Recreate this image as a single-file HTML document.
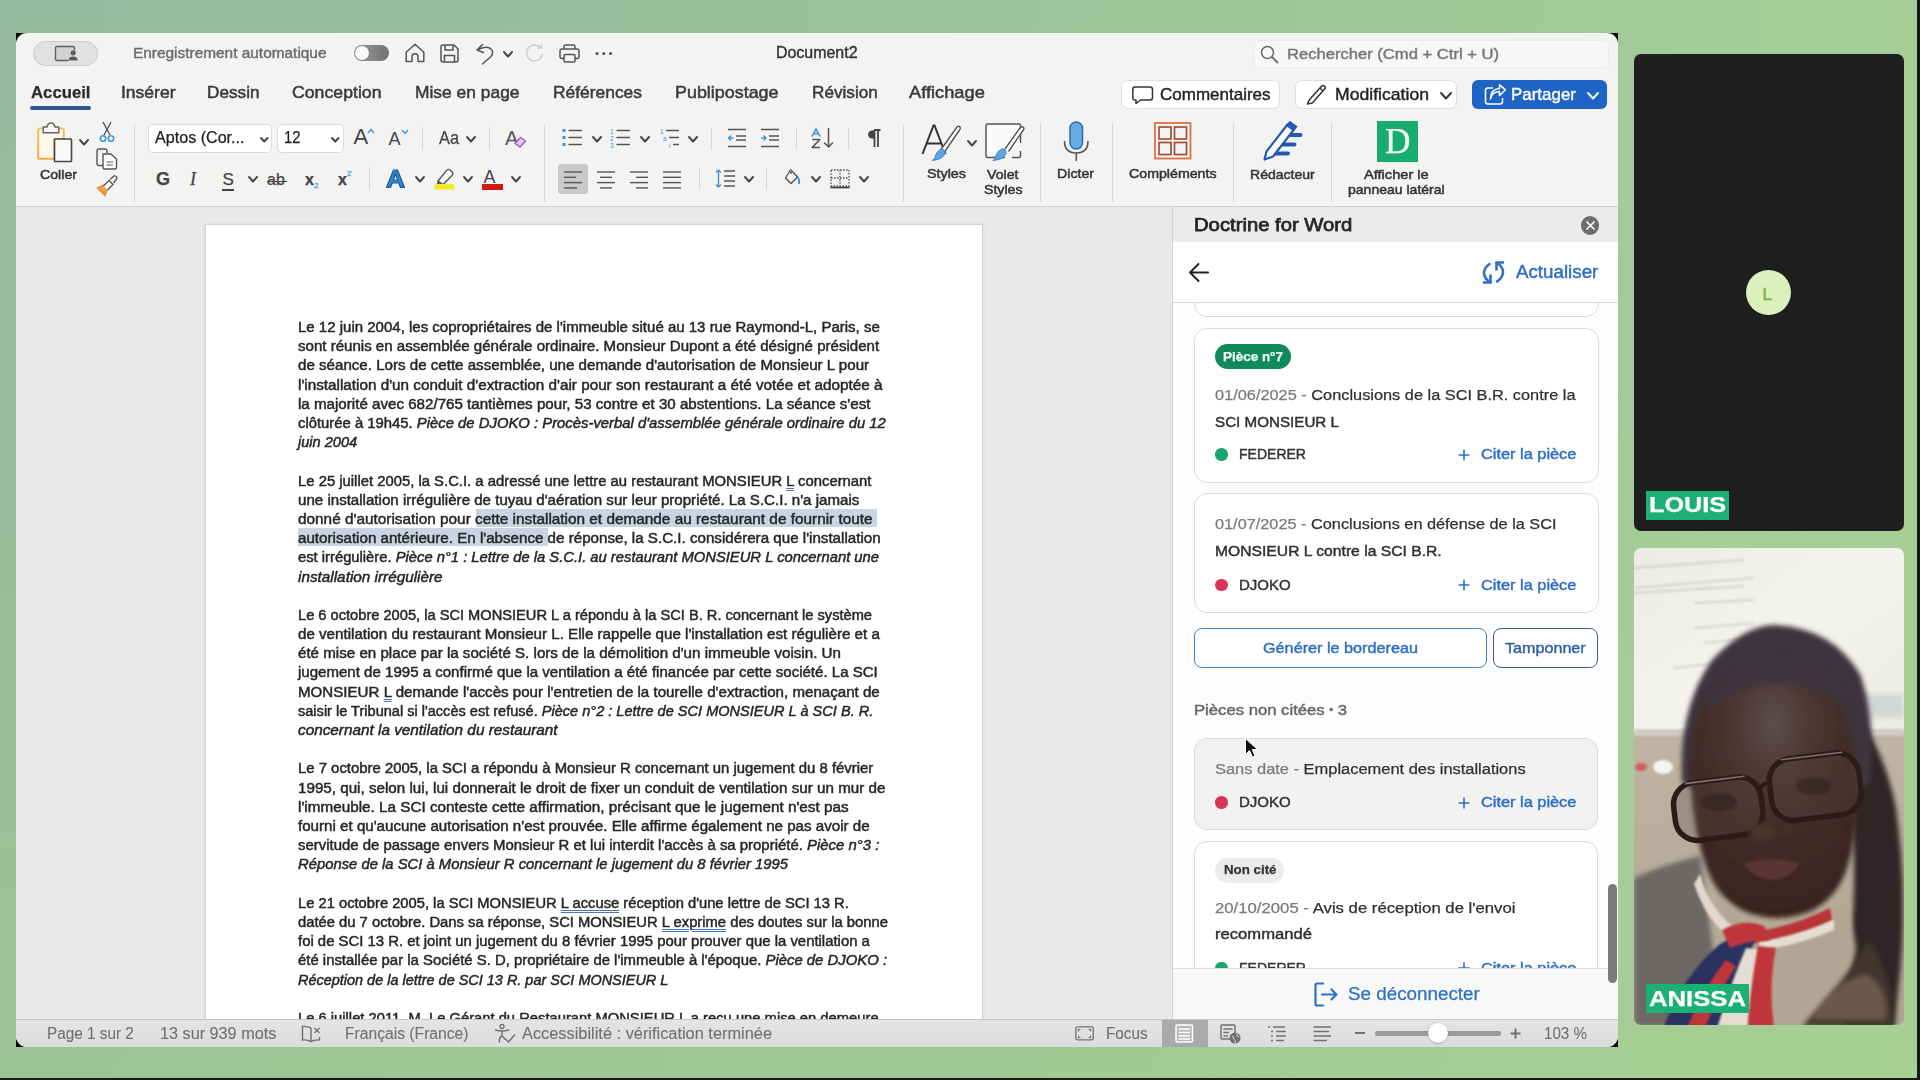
<!DOCTYPE html>
<html><head><meta charset="utf-8">
<style>
*{box-sizing:border-box;margin:0;padding:0}
html,body{width:1920px;height:1080px;overflow:hidden}
body{position:relative;font-family:"Liberation Sans",sans-serif;background:linear-gradient(180deg,rgba(170,210,140,0) 0%,rgba(170,210,140,0.1) 40%,rgba(170,210,140,0.4) 100%),linear-gradient(90deg,#93ba9b 0%,#9ac19a 45%,#a6ce97 100%);color:#222}
.a{position:absolute}
.t{position:absolute;white-space:nowrap;line-height:1;-webkit-text-stroke-width:0.25px}
svg{position:absolute;overflow:visible}
.sep{position:absolute;width:1px;background:#d6d6d4}
.chev{position:absolute}
u{text-decoration-line:underline;text-decoration-style:double;text-decoration-color:#4a78c0;text-decoration-thickness:1px;text-underline-offset:2px}
</style></head><body>
<div class="a" style="left:16px;top:33px;width:14px;height:14px;background:#050505"></div>
<div class="a" style="left:1604px;top:33px;width:14px;height:14px;background:#050505"></div>
<div class="a" style="left:16px;top:1033px;width:14px;height:14px;background:#050505"></div>
<div class="a" style="left:1604px;top:1033px;width:14px;height:14px;background:#050505"></div>
<div class="a" style="left:16px;top:33px;width:1602px;height:1014px;background:#f3f3f1;border-radius:11px"></div>
<div class="a" style="left:33px;top:41px;width:65px;height:25px;border-radius:13px;background:#e1e1e0;border:1px solid #cdcdcb"></div>
<svg style="left:54px;top:45px" width="26" height="18"><path d="M14.5 15.5 H3 Q1.5 15.5 1.5 14 V3 Q1.5 1.5 3 1.5 H19 Q20.5 1.5 20.5 3 V5" fill="#d2d2d1" stroke="#5e5e5e" stroke-width="1.4"/><circle cx="19.2" cy="7.8" r="2.6" fill="#5e5e5e"/><path d="M14.6 15.6 Q14.8 11.5 19.2 11.5 Q23.6 11.5 23.8 15.6 Z" fill="#5e5e5e"/></svg>
<div class="t" id="t1" style="left:132.50px;top:46.45px;font-size:14.00px;color:#6c6c6c;transform:scaleX(1.1002);transform-origin:0 0;-webkit-text-stroke-width:0.4px;">Enregistrement automatique</div>
<div class="a" style="left:354px;top:45px;width:35px;height:16px;border-radius:8px;background:linear-gradient(90deg,#9a9a9a,#727272)"></div>
<div class="a" style="left:355px;top:46px;width:14px;height:14px;border-radius:7px;background:#fafafa;box-shadow:0 0 1px #555"></div>
<svg style="left:405px;top:43px" width="20" height="20"><path d="M1.2 9.2 L10 1.3 L18.8 9.2 V18.6 H13 V13.4 Q13 10.8 10 10.8 Q7 10.8 7 13.4 V18.6 H1.2 Z" fill="none" stroke="#555" stroke-width="1.5" stroke-linejoin="round"/></svg>
<svg style="left:440px;top:44px" width="19" height="19"><path d="M1 3 Q1 1 3 1 H14 L18 5 V16 Q18 18 16 18 H3 Q1 18 1 16 Z" fill="none" stroke="#555" stroke-width="1.5"/><path d="M5 1 V6 H13 V1" fill="none" stroke="#555" stroke-width="1.5"/><path d="M4.5 18 V11.5 H14.5 V18" fill="none" stroke="#555" stroke-width="1.5"/></svg>
<svg style="left:475px;top:42px" width="20" height="23"><path d="M2 8 L7.5 2.5 M2 8 L8.5 10.5 M2.5 8 Q10 3.5 15.5 6.5 Q19.5 10 16 14.5 L7.5 22" fill="none" stroke="#555" stroke-width="1.5" stroke-linecap="round"/></svg>
<svg style="left:503.0px;top:51.0px" width="10" height="7"><path d="M1 1 L5.0 5.5 L9.0 1" fill="none" stroke="#444" stroke-width="1.9" stroke-linecap="round" stroke-linejoin="round"/></svg>
<svg style="left:525px;top:43px" width="20" height="20"><path d="M15.8 5 A8 8 0 1 0 17.5 11" fill="none" stroke="#cfcfcf" stroke-width="1.5"/><path d="M12.5 5 H16.5 V1" fill="none" stroke="#cfcfcf" stroke-width="1.5"/></svg>
<svg style="left:559px;top:44px" width="21" height="19"><path d="M5 5 V2.5 Q5 1 6.5 1 H14.5 Q16 1 16 2.5 V5" fill="none" stroke="#555" stroke-width="1.5"/><path d="M5 14.5 H3 Q1 14.5 1 12.5 V7 Q1 5 3 5 H18 Q20 5 20 7 V12.5 Q20 14.5 18 14.5 H16" fill="none" stroke="#555" stroke-width="1.5"/><rect x="5" y="10.5" width="11" height="7.5" rx="1.2" fill="none" stroke="#555" stroke-width="1.5"/></svg>
<svg style="left:595px;top:51px" width="18" height="5"><circle cx="2" cy="2.5" r="1.6" fill="#555"/><circle cx="8.8" cy="2.5" r="1.6" fill="#555"/><circle cx="15.6" cy="2.5" r="1.6" fill="#555"/></svg>
<div class="t" id="t2" style="left:776.00px;top:44.76px;font-size:16.00px;color:#333;transform:scaleX(0.9960);transform-origin:0 0;-webkit-text-stroke-width:0.4px;">Document2</div>
<div class="a" style="left:1253px;top:40px;width:356px;height:28px;border-radius:6px;background:#f7f7f5;border:1px solid #ebebe9"></div>
<svg style="left:1260px;top:45px" width="19" height="19"><circle cx="7.5" cy="7.5" r="6" fill="none" stroke="#6a6a6a" stroke-width="1.6"/><path d="M12 12 L17.5 17.5" stroke="#6a6a6a" stroke-width="1.8" stroke-linecap="round"/></svg>
<div class="t" id="t3" style="left:1287.00px;top:45.88px;font-size:15.50px;color:#777;transform:scaleX(1.0701);transform-origin:0 0;-webkit-text-stroke-width:0.45px;">Rechercher (Cmd + Ctrl + U)</div>
<div class="t" id="t4" style="left:30.70px;top:83.91px;font-size:17.00px;color:#2b2b2b;font-weight:bold;transform:scaleX(0.9837);transform-origin:0 0;">Accueil</div>
<div class="t" id="t5" style="left:120.70px;top:83.91px;font-size:17.00px;color:#3a3a3a;transform:scaleX(1.0298);transform-origin:0 0;-webkit-text-stroke-width:0.5px;">Insérer</div>
<div class="t" id="t6" style="left:207.30px;top:83.91px;font-size:17.00px;color:#3a3a3a;transform:scaleX(1.0102);transform-origin:0 0;-webkit-text-stroke-width:0.5px;">Dessin</div>
<div class="t" id="t7" style="left:292.30px;top:83.91px;font-size:17.00px;color:#3a3a3a;transform:scaleX(1.0405);transform-origin:0 0;-webkit-text-stroke-width:0.5px;">Conception</div>
<div class="t" id="t8" style="left:415.00px;top:83.91px;font-size:17.00px;color:#3a3a3a;transform:scaleX(1.0237);transform-origin:0 0;-webkit-text-stroke-width:0.5px;">Mise en page</div>
<div class="t" id="t9" style="left:552.70px;top:83.91px;font-size:17.00px;color:#3a3a3a;transform:scaleX(1.0237);transform-origin:0 0;-webkit-text-stroke-width:0.5px;">Références</div>
<div class="t" id="t10" style="left:675.00px;top:83.91px;font-size:17.00px;color:#3a3a3a;transform:scaleX(1.0528);transform-origin:0 0;-webkit-text-stroke-width:0.5px;">Publipostage</div>
<div class="t" id="t11" style="left:811.70px;top:83.91px;font-size:17.00px;color:#3a3a3a;transform:scaleX(1.0092);transform-origin:0 0;-webkit-text-stroke-width:0.5px;">Révision</div>
<div class="t" id="t12" style="left:909.30px;top:83.91px;font-size:17.00px;color:#3a3a3a;transform:scaleX(1.0740);transform-origin:0 0;-webkit-text-stroke-width:0.5px;">Affichage</div>
<div class="a" style="left:30px;top:105.5px;width:61px;height:4px;border-radius:2px;background:#2d5892"></div>
<div class="a" style="left:1121px;top:79.5px;width:159px;height:29px;border-radius:7px;background:#fff;border:1px solid #dedede"></div>
<svg style="left:1132px;top:86px" width="22" height="19"><path d="M3 1 H18 Q20.5 1 20.5 3.5 V11.5 Q20.5 14 18 14 H8.5 L4 17.5 V14 H3 Q0.8 14 0.8 11.5 V3.5 Q0.8 1 3 1 Z" fill="none" stroke="#333" stroke-width="1.5" stroke-linejoin="round"/></svg>
<div class="t" id="t13" style="left:1159.70px;top:86.01px;font-size:17.00px;color:#222;transform:scaleX(1.0005);transform-origin:0 0;-webkit-text-stroke-width:0.4px;">Commentaires</div>
<div class="a" style="left:1295px;top:79.5px;width:162px;height:29px;border-radius:7px;background:#fff;border:1px solid #dedede"></div>
<svg style="left:1306px;top:84px" width="22" height="21"><path d="M3.2 16 L15.5 2.2 Q17 0.8 18.6 2.2 Q20 3.6 18.6 5.1 L6.3 18.9 L1.5 20 Z" fill="none" stroke="#333" stroke-width="1.5" stroke-linejoin="round"/><path d="M14 4 L17 7" stroke="#333" stroke-width="1.4"/></svg>
<div class="t" id="t14" style="left:1334.50px;top:86.01px;font-size:17.00px;color:#222;transform:scaleX(1.0362);transform-origin:0 0;-webkit-text-stroke-width:0.4px;">Modification</div>
<svg style="left:1439.5px;top:92.0px" width="12" height="8"><path d="M1 1 L6.0 6.5 L11.0 1" fill="none" stroke="#333" stroke-width="1.9" stroke-linecap="round" stroke-linejoin="round"/></svg>
<div class="a" style="left:1471.5px;top:79.5px;width:135px;height:29px;border-radius:6px;background:#1e63c6"></div>
<svg style="left:1484px;top:84px" width="23" height="21"><path d="M9 4 H4 Q1.5 4 1.5 6.5 V17.5 Q1.5 20 4 20 H16 Q18.5 20 18.5 17.5 V14" fill="none" stroke="#fff" stroke-width="1.5"/><path d="M6.5 15 Q7.5 8 15.5 7.5 V11.5 L21.5 5.8 L15.5 0.8 V4.5 Q6.5 5 6.5 15 Z" fill="none" stroke="#fff" stroke-width="1.5" stroke-linejoin="round"/></svg>
<div class="t" id="t15" style="left:1511.00px;top:86.01px;font-size:17.00px;color:#fff;transform:scaleX(0.9969);transform-origin:0 0;-webkit-text-stroke-width:0.4px;">Partager</div>
<svg style="left:1587.0px;top:92.0px" width="12" height="8"><path d="M1 1 L6.0 6.5 L11.0 1" fill="none" stroke="#fff" stroke-width="1.9" stroke-linecap="round" stroke-linejoin="round"/></svg>
<div class="a" style="left:16px;top:206px;width:1602px;height:1px;background:#cfcfcd"></div>
<svg style="left:37px;top:122px" width="38" height="42"><defs><linearGradient id="cbg" x1="0" y1="0" x2="0" y2="1"><stop offset="0" stop-color="#e9c46a"/><stop offset="1" stop-color="#f0a848"/></linearGradient></defs><path d="M6.5 6.5 H2.5 Q1.2 6.5 1.2 8 V35.5 Q1.2 36.8 2.5 36.8 H17.5 V17 H26.8 V8 Q26.8 6.5 25.5 6.5 H21.5" fill="#fdf8ea" stroke="url(#cbg)" stroke-width="2"/><path d="M6.2 5 H10 Q10.8 1 14 1 Q17.2 1 18 5 H21.8 V10.8 H6.2 Z" fill="#fafafa" stroke="#666" stroke-width="1.5" stroke-linejoin="round"/><rect x="17.5" y="17" width="17" height="22.5" rx="0.8" fill="#fafafa" stroke="#444" stroke-width="1.6"/></svg>
<svg style="left:78.5px;top:139.0px" width="10" height="7"><path d="M1 1 L5.0 5.5 L9.0 1" fill="none" stroke="#444" stroke-width="1.9" stroke-linecap="round" stroke-linejoin="round"/></svg>
<div class="t" id="t16" style="left:40.00px;top:168.07px;font-size:13.50px;color:#333;transform:scaleX(1.0492);transform-origin:0 0;-webkit-text-stroke-width:0.5px;">Coller</div>
<svg style="left:99px;top:121px" width="16" height="22"><path d="M4 1 L11 14 M12 1 L5 14" stroke="#555" stroke-width="1.4"/><circle cx="4" cy="17.5" r="2.7" fill="none" stroke="#3f96d6" stroke-width="1.6"/><circle cx="12" cy="17.5" r="2.7" fill="none" stroke="#3f96d6" stroke-width="1.6"/></svg>
<svg style="left:96px;top:148px" width="22" height="22"><path d="M9 17.5 H3 Q1 17.5 1 15.5 V3 Q1 1 3 1 H9 Q11 1 11 3 V5" fill="none" stroke="#555" stroke-width="1.4"/><path d="M7 6 H15 L20.5 11 V19.5 Q20.5 21 19 21 H8.5 Q7 21 7 19.5 Z" fill="#fff" stroke="#555" stroke-width="1.4"/><path d="M10.5 14 H17 M10.5 17 H17" stroke="#555" stroke-width="1.2"/></svg>
<svg style="left:96px;top:175px" width="23" height="23"><path d="M1.5 13 L9 20.5 L11.5 14 L7.5 10 Z" fill="#f0a04b" stroke="#e08a32" stroke-width="1.3"/><path d="M7.5 11 L13 5.5 L17 9.5 L11.5 15" fill="#fff" stroke="#555" stroke-width="1.4"/><path d="M14 4.5 L18 1 Q20.5 0.5 21 3 Q21 4 17.5 8" fill="none" stroke="#555" stroke-width="1.4"/></svg>
<div class="sep" style="left:134px;top:124px;height:79px;background:#d8d8d6"></div>
<div class="a" style="left:148px;top:124px;width:124px;height:29px;border-radius:5px;background:#fff;border:1px solid #dcdcda"></div>
<div class="t" id="t17" style="left:155.00px;top:129.96px;font-size:16.00px;color:#222;transform:scaleX(1.0065);transform-origin:0 0;">Aptos (Cor...</div>
<svg style="left:260.0px;top:136.5px" width="8" height="6"><path d="M1 1 L4.2 4.5 L7.5 1" fill="none" stroke="#444" stroke-width="1.9" stroke-linecap="round" stroke-linejoin="round"/></svg>
<div class="a" style="left:277px;top:124px;width:67px;height:29px;border-radius:5px;background:#fff;border:1px solid #dcdcda"></div>
<div class="t" id="t18" style="left:283.50px;top:129.96px;font-size:16.00px;color:#222;transform:scaleX(0.9271);transform-origin:0 0;">12</div>
<svg style="left:331.0px;top:136.5px" width="8" height="6"><path d="M1 1 L4.2 4.5 L7.5 1" fill="none" stroke="#444" stroke-width="1.9" stroke-linecap="round" stroke-linejoin="round"/></svg>
<div class="t" id="t19" style="left:353.50px;top:126.18px;font-size:22.00px;color:#444;-webkit-text-stroke-width:0;">A</div>
<svg style="left:367px;top:128px" width="8" height="6"><path d="M1 5 L4 1.5 L7 5" fill="none" stroke="#3f96d6" stroke-width="1.4"/></svg>
<div class="t" id="t20" style="left:388.50px;top:129.76px;font-size:18.00px;color:#444;-webkit-text-stroke-width:0;">A</div>
<svg style="left:401px;top:129px" width="8" height="6"><path d="M1 1 L4 4.5 L7 1" fill="none" stroke="#3f96d6" stroke-width="1.4"/></svg>
<div class="sep" style="left:422px;top:127px;height:23px;background:#d8d8d6"></div>
<div class="t" id="t21" style="left:438.50px;top:130.19px;font-size:17.50px;color:#444;transform:scaleX(0.9343);transform-origin:0 0;">Aa</div>
<svg style="left:466.0px;top:135.5px" width="10" height="7"><path d="M1 1 L5.0 5.5 L9.0 1" fill="none" stroke="#444" stroke-width="1.9" stroke-linecap="round" stroke-linejoin="round"/></svg>
<div class="sep" style="left:489px;top:127px;height:23px;background:#d8d8d6"></div>
<div class="t" id="t22" style="left:505.00px;top:127.57px;font-size:20.00px;color:#555;-webkit-text-stroke-width:0;">A</div>
<svg style="left:513px;top:136px" width="14" height="12"><path d="M2 7.5 L7.5 1.5 L12.5 5 L7 11 Z" fill="#e3c7ef" stroke="#a160c8" stroke-width="1.4"/></svg>
<div class="sep" style="left:544px;top:124px;height:78px;background:#d8d8d6"></div>
<div class="t" id="t23" style="left:156.00px;top:170.26px;font-size:18.00px;color:#444;font-weight:bold;">G</div>
<div class="t" id="t24" style="left:190.00px;top:170.26px;font-size:18.00px;color:#444;font-style:italic;font-family:'Liberation Serif',serif;">I</div>
<div class="t" id="t25" style="left:222.50px;top:171.11px;font-size:17.00px;color:#444;">S</div>
<div class="a" style="left:222px;top:189px;width:12px;height:1.5px;background:#444"></div>
<svg style="left:247.5px;top:175.5px" width="10" height="7"><path d="M1 1 L5.0 5.5 L9.0 1" fill="none" stroke="#444" stroke-width="1.9" stroke-linecap="round" stroke-linejoin="round"/></svg>
<div class="t" id="t26" style="left:267.00px;top:171.96px;font-size:16.00px;color:#444;">ab</div>
<div class="a" style="left:267px;top:180.5px;width:20px;height:1.5px;background:#444"></div>
<div class="t" id="t27" style="left:305.00px;top:171.96px;font-size:16.00px;color:#444;font-weight:bold;">x</div>
<div class="t" id="t28" style="left:314.00px;top:182.23px;font-size:8.00px;color:#3f96d6;">2</div>
<div class="t" id="t29" style="left:338.00px;top:171.96px;font-size:16.00px;color:#444;font-weight:bold;">x</div>
<div class="t" id="t30" style="left:347.00px;top:170.23px;font-size:8.00px;color:#3f96d6;">2</div>
<div class="sep" style="left:369px;top:167px;height:23px;background:#d8d8d6"></div>
<svg style="left:385px;top:169px" width="22" height="20"><path d="M1.5 18.5 L8.5 1 H12.5 L19.5 18.5 H15.5 L13.8 14 H7.2 L5.5 18.5 Z M8.3 11 H12.7 L10.5 5 Z" fill="#2f86c8" stroke="#1e5a96" stroke-width="1.2" stroke-linejoin="round"/></svg>
<svg style="left:414.5px;top:176.0px" width="10" height="7"><path d="M1 1 L5.0 5.5 L9.0 1" fill="none" stroke="#444" stroke-width="1.9" stroke-linecap="round" stroke-linejoin="round"/></svg>
<svg style="left:434px;top:168px" width="22" height="23"><path d="M4 13 L13 2 Q14.5 0.8 16 2 L18.5 4.5 Q19.5 6 18 7.5 L9 16.5 Z" fill="#fff" stroke="#555" stroke-width="1.4"/><path d="M4 13 L2.5 16.5 L9 16.5" fill="#555"/><rect x="0.5" y="16" width="20" height="5.5" rx="2" fill="#eeee22"/></svg>
<svg style="left:462.5px;top:176.0px" width="10" height="7"><path d="M1 1 L5.0 5.5 L9.0 1" fill="none" stroke="#444" stroke-width="1.9" stroke-linecap="round" stroke-linejoin="round"/></svg>
<div class="t" id="t31" style="left:483.50px;top:168.26px;font-size:18.00px;color:#444;-webkit-text-stroke-width:0;">A</div>
<div class="a" style="left:482px;top:184px;width:20.5px;height:5.5px;background:#d01818"></div>
<svg style="left:510.5px;top:176.0px" width="10" height="7"><path d="M1 1 L5.0 5.5 L9.0 1" fill="none" stroke="#444" stroke-width="1.9" stroke-linecap="round" stroke-linejoin="round"/></svg>
<svg style="left:562px;top:128px" width="22" height="20"><rect x="0.5" y="1" width="3" height="3" fill="#3f96d6"/><rect x="0.5" y="8" width="3" height="3" fill="#3f96d6"/><rect x="0.5" y="15" width="3" height="3" fill="#3f96d6"/><path d="M6.5 2.5 H20 M6.5 9.5 H20 M6.5 16.5 H20" stroke="#555" stroke-width="1.5"/></svg>
<svg style="left:591.5px;top:135.5px" width="10" height="7"><path d="M1 1 L5.0 5.5 L9.0 1" fill="none" stroke="#444" stroke-width="1.9" stroke-linecap="round" stroke-linejoin="round"/></svg>
<svg style="left:610px;top:127px" width="22" height="22"><text x="0" y="6.5" font-size="6.5" fill="#3f96d6" font-family="Liberation Sans">1</text><text x="0" y="13.5" font-size="6.5" fill="#3f96d6" font-family="Liberation Sans">2</text><text x="0" y="20.5" font-size="6.5" fill="#3f96d6" font-family="Liberation Sans">3</text><path d="M6.5 3.5 H20 M6.5 10.5 H20 M6.5 17.5 H20" stroke="#555" stroke-width="1.5"/></svg>
<svg style="left:639.5px;top:135.5px" width="10" height="7"><path d="M1 1 L5.0 5.5 L9.0 1" fill="none" stroke="#444" stroke-width="1.9" stroke-linecap="round" stroke-linejoin="round"/></svg>
<svg style="left:659px;top:127px" width="22" height="22"><text x="1" y="6.5" font-size="6.5" fill="#3f96d6" font-family="Liberation Sans">1</text><text x="4" y="13.5" font-size="6.5" fill="#3f96d6" font-family="Liberation Sans">a</text><text x="10" y="20.5" font-size="6" fill="#555" font-family="Liberation Sans">i</text><path d="M7 3.5 H20 M10 10.5 H20 M14 17.5 H20" stroke="#555" stroke-width="1.5"/></svg>
<svg style="left:688.0px;top:135.5px" width="10" height="7"><path d="M1 1 L5.0 5.5 L9.0 1" fill="none" stroke="#444" stroke-width="1.9" stroke-linecap="round" stroke-linejoin="round"/></svg>
<div class="sep" style="left:711px;top:128px;height:22px;background:#d8d8d6"></div>
<svg style="left:727px;top:128px" width="21" height="20"><path d="M1 1.5 H19 M9 8 H19 M9 12 H19 M1 18.5 H19" stroke="#555" stroke-width="1.5"/><path d="M6.5 10 H1.5 M4 7.5 L1.5 10 L4 12.5" fill="none" stroke="#3f96d6" stroke-width="1.4"/></svg>
<svg style="left:760px;top:128px" width="21" height="20"><path d="M1 1.5 H19 M9 8 H19 M9 12 H19 M1 18.5 H19" stroke="#555" stroke-width="1.5"/><path d="M1 10 H6 M3.5 7.5 L6 10 L3.5 12.5" fill="none" stroke="#3f96d6" stroke-width="1.4"/></svg>
<div class="sep" style="left:796px;top:128px;height:22px;background:#d8d8d6"></div>
<svg style="left:811px;top:128px" width="11" height="22"><path d="M1 8.5 L5 0.8 L9 8.5 M2.5 5.8 H7.5" fill="none" stroke="#3f96d6" stroke-width="1.6"/><path d="M1.2 11.5 H8.8 L1.2 19.5 H9" fill="none" stroke="#555" stroke-width="1.7" stroke-linejoin="round"/></svg>
<svg style="left:822px;top:127px" width="13" height="22"><path d="M6.5 1 V20 M2 15.5 L6.5 20 L11 15.5" fill="none" stroke="#555" stroke-width="1.5"/></svg>
<div class="sep" style="left:848px;top:128px;height:22px;background:#d8d8d6"></div>
<svg style="left:867px;top:129px" width="15" height="19"><path d="M7 1 H13.5 M7.5 1 V18 M11 1 V18" fill="none" stroke="#444" stroke-width="1.8"/><path d="M7.5 1.2 Q1 1.2 1 5.5 Q1 9.8 7.5 9.8 Z" fill="#444"/></svg>
<div class="sep" style="left:903px;top:124px;height:78px;background:#d8d8d6"></div>
<div class="a" style="left:558px;top:164px;width:30px;height:30px;border-radius:3px;background:#c9c9c7"></div>
<svg style="left:564px;top:171px" width="20" height="20"><path d="M0.0 1.0 H18.0" stroke="#555" stroke-width="1.4"/><path d="M0.0 6.3 H12.0" stroke="#555" stroke-width="1.4"/><path d="M0.0 11.6 H18.0" stroke="#555" stroke-width="1.4"/><path d="M0.0 16.9 H13.0" stroke="#555" stroke-width="1.4"/></svg>
<svg style="left:597px;top:171px" width="20" height="20"><path d="M0.0 1.0 H18.0" stroke="#555" stroke-width="1.4"/><path d="M3.0 6.3 H15.0" stroke="#555" stroke-width="1.4"/><path d="M0.0 11.6 H18.0" stroke="#555" stroke-width="1.4"/><path d="M3.0 16.9 H15.0" stroke="#555" stroke-width="1.4"/></svg>
<svg style="left:630px;top:171px" width="20" height="20"><path d="M0.0 1.0 H18.0" stroke="#555" stroke-width="1.4"/><path d="M6.0 6.3 H18.0" stroke="#555" stroke-width="1.4"/><path d="M0.0 11.6 H18.0" stroke="#555" stroke-width="1.4"/><path d="M6.0 16.9 H18.0" stroke="#555" stroke-width="1.4"/></svg>
<svg style="left:663px;top:171px" width="20" height="20"><path d="M0.0 1.0 H18.0" stroke="#555" stroke-width="1.4"/><path d="M0.0 6.3 H18.0" stroke="#555" stroke-width="1.4"/><path d="M0.0 11.6 H18.0" stroke="#555" stroke-width="1.4"/><path d="M0.0 16.9 H18.0" stroke="#555" stroke-width="1.4"/></svg>
<div class="sep" style="left:699px;top:168px;height:22px;background:#d8d8d6"></div>
<svg style="left:715px;top:169px" width="22" height="20"><path d="M3.5 1 V18 M1 3.5 L3.5 1 L6 3.5 M1 15.5 L3.5 18 L6 15.5" fill="none" stroke="#3f96d6" stroke-width="1.4"/><path d="M9 2 H20 M9 7 H20 M9 12 H20 M9 17 H20" stroke="#555" stroke-width="1.5"/></svg>
<svg style="left:744.0px;top:176.0px" width="10" height="7"><path d="M1 1 L5.0 5.5 L9.0 1" fill="none" stroke="#444" stroke-width="1.9" stroke-linecap="round" stroke-linejoin="round"/></svg>
<div class="sep" style="left:766px;top:168px;height:22px;background:#d8d8d6"></div>
<svg style="left:784px;top:168px" width="18" height="20"><path d="M6 2.5 L1.5 10 L7 15.5 L13.5 9 L8 3" fill="none" stroke="#555" stroke-width="1.4" stroke-linejoin="round"/><path d="M7 1 V6" stroke="#555" stroke-width="1.4"/><path d="M13.5 9 Q16 12 15 16" fill="none" stroke="#3f96d6" stroke-width="1.8"/></svg>
<svg style="left:811.0px;top:176.0px" width="10" height="7"><path d="M1 1 L5.0 5.5 L9.0 1" fill="none" stroke="#444" stroke-width="1.9" stroke-linecap="round" stroke-linejoin="round"/></svg>
<svg style="left:830px;top:169px" width="21" height="20"><path d="M1 1 H19 V17 H1 Z M10 1 V17 M1 9 H19" fill="none" stroke="#555" stroke-width="1.3" stroke-dasharray="1.6 1.4"/><path d="M0.5 18.5 H19.5" stroke="#333" stroke-width="1.6"/></svg>
<svg style="left:859.0px;top:176.0px" width="10" height="7"><path d="M1 1 L5.0 5.5 L9.0 1" fill="none" stroke="#444" stroke-width="1.9" stroke-linecap="round" stroke-linejoin="round"/></svg>
<svg style="left:921px;top:124px" width="42" height="40"><path d="M1.5 30 L12.5 1.5 H13.5 L24.5 30 M6 19.5 H20" fill="none" stroke="#333" stroke-width="2"/><path d="M20 25.5 L36 3 Q38 1.5 39 3 Q40 4.5 38.5 6 L23.5 28" fill="#fff" stroke="#555" stroke-width="1.4"/><path d="M14 34 Q15 27 20.5 25 Q24.5 25 24 29.5 Q22 35.5 11 36.5 Z" fill="#5ea4de" stroke="#3e86c6" stroke-width="1"/></svg>
<svg style="left:966.5px;top:139.5px" width="10" height="7"><path d="M1 1 L5.0 5.5 L9.0 1" fill="none" stroke="#444" stroke-width="1.9" stroke-linecap="round" stroke-linejoin="round"/></svg>
<div class="t" id="t32" style="left:927.00px;top:167.27px;font-size:13.50px;color:#333;transform:scaleX(1.0608);transform-origin:0 0;-webkit-text-stroke-width:0.5px;">Styles</div>
<svg style="left:985px;top:123px" width="42" height="40"><path d="M20 34.5 H2.5 Q1 34.5 1 33 V2.5 Q1 1 2.5 1 H34 Q35.5 1 35.5 2.5 V20" fill="#fafafa" stroke="#555" stroke-width="1.5"/><path d="M27 34.5 H34 Q35.5 34.5 35.5 33 V28" fill="none" stroke="#555" stroke-width="1.5"/><path d="M20 26 L35 5 Q37 3 38.5 4.5 Q39.5 6 38 7.5 L23.5 28.5" fill="#fff" stroke="#555" stroke-width="1.4"/><path d="M10.5 35 Q11.5 28 17 26 Q21.5 25.5 21 30.5 Q19 36.5 8 37.5 Z" fill="#5ea4de" stroke="#3e86c6" stroke-width="1"/></svg>
<div class="t" id="t33" style="left:987.00px;top:168.07px;font-size:13.50px;color:#333;transform:scaleX(1.0489);transform-origin:0 0;-webkit-text-stroke-width:0.5px;">Volet</div>
<div class="t" id="t34" style="left:984.00px;top:183.37px;font-size:13.50px;color:#333;transform:scaleX(1.0472);transform-origin:0 0;-webkit-text-stroke-width:0.5px;">Styles</div>
<div class="sep" style="left:1040px;top:123px;height:79px;background:#d8d8d6"></div>
<svg style="left:1063px;top:121px" width="27" height="41"><rect x="7" y="1" width="12.5" height="27" rx="6.25" fill="#68aae4" stroke="#2d6aa8" stroke-width="1.5"/><path d="M1.5 20 Q1.5 32 13.3 32 Q25 32 25 20" fill="none" stroke="#555" stroke-width="1.6"/><path d="M13.3 32 V40" stroke="#555" stroke-width="1.6"/></svg>
<div class="t" id="t35" style="left:1056.50px;top:167.27px;font-size:13.50px;color:#333;transform:scaleX(1.0492);transform-origin:0 0;-webkit-text-stroke-width:0.5px;">Dicter</div>
<div class="sep" style="left:1112px;top:123px;height:79px;background:#d8d8d6"></div>
<svg style="left:1154px;top:122px" width="38" height="38"><rect x="1" y="1" width="35.5" height="35.5" fill="none" stroke="#e07040" stroke-width="1.8"/><rect x="5" y="5" width="12" height="12" fill="none" stroke="#9c4a2e" stroke-width="1.6"/><rect x="20.5" y="5" width="12" height="12" fill="none" stroke="#9c4a2e" stroke-width="1.6"/><rect x="5" y="20.5" width="12" height="12" fill="none" stroke="#9c4a2e" stroke-width="1.6"/><rect x="20.5" y="20.5" width="12" height="12" fill="none" stroke="#9c4a2e" stroke-width="1.6"/></svg>
<div class="t" id="t36" style="left:1129.00px;top:167.27px;font-size:13.50px;color:#333;transform:scaleX(1.0507);transform-origin:0 0;-webkit-text-stroke-width:0.5px;">Compléments</div>
<div class="sep" style="left:1233px;top:123px;height:79px;background:#d8d8d6"></div>
<svg style="left:1262px;top:121px" width="42" height="41"><path d="M23 12 H38.5 Q40.5 12 40.5 14 Q40.5 16 38.5 16 H21 Z M18 21.5 H32.5 Q34.5 21.5 34.5 23.5 Q34.5 25.5 32.5 25.5 H15 Z M11 30.5 H26 Q28 30.5 28 32.5 Q28 34.5 26 34.5 H8 Z" fill="#2358b5"/><path d="M2.5 38.5 L4.5 30.5 L25.5 3.5 L32 8.5 L11 35.5 Z" fill="#fff" stroke="#2358b5" stroke-width="2.2" stroke-linejoin="round"/><path d="M24.5 4.5 L28 0.8 L34.5 5.5 L31.5 9.5 Z" fill="#2358b5" stroke="#2358b5" stroke-width="1.5" stroke-linejoin="round"/></svg>
<div class="t" id="t37" style="left:1250.30px;top:167.57px;font-size:13.50px;color:#333;transform:scaleX(1.0386);transform-origin:0 0;-webkit-text-stroke-width:0.5px;">Rédacteur</div>
<div class="sep" style="left:1331px;top:122px;height:80px;background:#d8d8d6"></div>
<div class="a" style="left:1377px;top:121px;width:41px;height:41px;background:#17ad6c"></div>
<div class="t" id="t38" style="left:1384.50px;top:123.33px;font-size:36.00px;color:#f4fff8;font-family:'Liberation Serif',serif;transform:scaleX(0.9808);transform-origin:0 0;">D</div>
<div class="t" id="t39" style="left:1364.30px;top:167.57px;font-size:13.50px;color:#333;transform:scaleX(1.0823);transform-origin:0 0;-webkit-text-stroke-width:0.5px;">Afficher le</div>
<div class="t" id="t40" style="left:1348.30px;top:182.87px;font-size:13.50px;color:#333;transform:scaleX(1.0389);transform-origin:0 0;-webkit-text-stroke-width:0.5px;">panneau latéral</div><div class="a" style="left:16px;top:207px;width:1157px;height:812px;background:#e9e9e8"></div>
<div class="a" id="page" style="left:205.5px;top:225px;width:776.5px;height:794px;background:#fff;box-shadow:0 0 0 1px #d2d2d2,0 0 4px 1px rgba(0,0,0,0.08);overflow:hidden">
</div>
<div class="a" style="left:475.8px;top:508.9px;width:401.5px;height:18.6px;background:#c9d4e4"></div>
<div class="a" style="left:298px;top:527.5px;width:249.7px;height:18.5px;background:#c9d4e4"></div>
<div class="a" style="left:205px;top:225px;width:777px;height:794px;overflow:hidden">
<div class="t" id="t41" style="left:93.40px;top:95.05px;font-size:14.00px;color:#262626;transform:scaleX(1.0719);transform-origin:0 0;-webkit-text-stroke:0.45px #262626;">Le 12 juin 2004, les copropriétaires de l'immeuble situé au 13 rue Raymond-L, Paris, se</div>
<div class="t" id="t42" style="left:93.40px;top:114.24px;font-size:14.00px;color:#262626;transform:scaleX(1.0759);transform-origin:0 0;-webkit-text-stroke:0.45px #262626;">sont réunis en assemblée générale ordinaire. Monsieur Dupont a été désigné président</div>
<div class="t" id="t43" style="left:93.40px;top:133.43px;font-size:14.00px;color:#262626;transform:scaleX(1.0795);transform-origin:0 0;-webkit-text-stroke:0.45px #262626;">de séance. Lors de cette assemblée, une demande d'autorisation de Monsieur L pour</div>
<div class="t" id="t44" style="left:93.40px;top:152.62px;font-size:14.00px;color:#262626;transform:scaleX(1.0902);transform-origin:0 0;-webkit-text-stroke:0.45px #262626;">l'installation d'un conduit d'extraction d'air pour son restaurant a été votée et adoptée à</div>
<div class="t" id="t45" style="left:93.40px;top:171.81px;font-size:14.00px;color:#262626;transform:scaleX(1.0809);transform-origin:0 0;-webkit-text-stroke:0.45px #262626;">la majorité avec 682/765 tantièmes pour, 53 contre et 30 abstentions. La séance s'est</div>
<div class="t" id="t46" style="left:93.40px;top:191.00px;font-size:14.00px;color:#262626;transform:scaleX(1.0603);transform-origin:0 0;-webkit-text-stroke:0.45px #262626;">clôturée à 19h45. <i>Pièce de DJOKO : Procès-verbal d'assemblée générale ordinaire du 12</i></div>
<div class="t" id="t47" style="left:93.40px;top:210.19px;font-size:14.00px;color:#262626;transform:scaleX(1.0417);transform-origin:0 0;-webkit-text-stroke:0.45px #262626;"><i>juin 2004</i></div>
<div class="t" id="t48" style="left:93.40px;top:248.57px;font-size:14.00px;color:#262626;transform:scaleX(1.0598);transform-origin:0 0;-webkit-text-stroke:0.45px #262626;">Le 25 juillet 2005, la S.C.I. a adressé une lettre au restaurant MONSIEUR <u>L</u> concernant</div>
<div class="t" id="t49" style="left:93.40px;top:267.76px;font-size:14.00px;color:#262626;transform:scaleX(1.0783);transform-origin:0 0;-webkit-text-stroke:0.45px #262626;">une installation irrégulière de tuyau d'aération sur leur propriété. La S.C.I. n'a jamais</div>
<div class="t" id="t50" style="left:93.40px;top:286.95px;font-size:14.00px;color:#262626;transform:scaleX(1.0963);transform-origin:0 0;-webkit-text-stroke:0.45px #262626;">donné d'autorisation pour cette installation et demande au restaurant de fournir toute</div>
<div class="t" id="t51" style="left:93.40px;top:306.14px;font-size:14.00px;color:#262626;transform:scaleX(1.0820);transform-origin:0 0;-webkit-text-stroke:0.45px #262626;">autorisation antérieure. En l'absence de réponse, la S.C.I. considérera que l'installation</div>
<div class="t" id="t52" style="left:93.40px;top:325.33px;font-size:14.00px;color:#262626;transform:scaleX(1.0547);transform-origin:0 0;-webkit-text-stroke:0.45px #262626;">est irrégulière. <i>Pièce n°1 : Lettre de la S.C.I. au restaurant MONSIEUR L concernant une</i></div>
<div class="t" id="t53" style="left:93.40px;top:344.52px;font-size:14.00px;color:#262626;transform:scaleX(1.0930);transform-origin:0 0;-webkit-text-stroke:0.45px #262626;"><i>installation irrégulière</i></div>
<div class="t" id="t54" style="left:93.40px;top:382.90px;font-size:14.00px;color:#262626;transform:scaleX(1.0458);transform-origin:0 0;-webkit-text-stroke:0.45px #262626;">Le 6 octobre 2005, la SCI MONSIEUR L a répondu à la SCI B. R. concernant le système</div>
<div class="t" id="t55" style="left:93.40px;top:402.09px;font-size:14.00px;color:#262626;transform:scaleX(1.0812);transform-origin:0 0;-webkit-text-stroke:0.45px #262626;">de ventilation du restaurant Monsieur L. Elle rappelle que l'installation est régulière et a</div>
<div class="t" id="t56" style="left:93.40px;top:421.28px;font-size:14.00px;color:#262626;transform:scaleX(1.0809);transform-origin:0 0;-webkit-text-stroke:0.45px #262626;">été mise en place par la société S. lors de la démolition d'un immeuble voisin. Un</div>
<div class="t" id="t57" style="left:93.40px;top:440.47px;font-size:14.00px;color:#262626;transform:scaleX(1.0750);transform-origin:0 0;-webkit-text-stroke:0.45px #262626;">jugement de 1995 a confirmé que la ventilation a été financée par cette société. La SCI</div>
<div class="t" id="t58" style="left:93.40px;top:459.66px;font-size:14.00px;color:#262626;transform:scaleX(1.0793);transform-origin:0 0;-webkit-text-stroke:0.45px #262626;">MONSIEUR <u>L</u> demande l'accès pour l'entretien de la tourelle d'extraction, menaçant de</div>
<div class="t" id="t59" style="left:93.40px;top:478.85px;font-size:14.00px;color:#262626;transform:scaleX(1.0394);transform-origin:0 0;-webkit-text-stroke:0.45px #262626;">saisir le Tribunal si l'accès est refusé. <i>Pièce n°2 : Lettre de SCI MONSIEUR L à SCI B. R.</i></div>
<div class="t" id="t60" style="left:93.40px;top:498.04px;font-size:14.00px;color:#262626;transform:scaleX(1.0936);transform-origin:0 0;-webkit-text-stroke:0.45px #262626;"><i>concernant la ventilation du restaurant</i></div>
<div class="t" id="t61" style="left:93.40px;top:536.42px;font-size:14.00px;color:#262626;transform:scaleX(1.0636);transform-origin:0 0;-webkit-text-stroke:0.45px #262626;">Le 7 octobre 2005, la SCI a répondu à Monsieur R concernant un jugement du 8 février</div>
<div class="t" id="t62" style="left:93.40px;top:555.61px;font-size:14.00px;color:#262626;transform:scaleX(1.0844);transform-origin:0 0;-webkit-text-stroke:0.45px #262626;">1995, qui, selon lui, lui donnerait le droit de fixer un conduit de ventilation sur un mur de</div>
<div class="t" id="t63" style="left:93.40px;top:574.80px;font-size:14.00px;color:#262626;transform:scaleX(1.0909);transform-origin:0 0;-webkit-text-stroke:0.45px #262626;">l'immeuble. La SCI conteste cette affirmation, précisant que le jugement n'est pas</div>
<div class="t" id="t64" style="left:93.40px;top:593.99px;font-size:14.00px;color:#262626;transform:scaleX(1.0808);transform-origin:0 0;-webkit-text-stroke:0.45px #262626;">fourni et qu'aucune autorisation n'est prouvée. Elle affirme également ne pas avoir de</div>
<div class="t" id="t65" style="left:93.40px;top:613.18px;font-size:14.00px;color:#262626;transform:scaleX(1.0663);transform-origin:0 0;-webkit-text-stroke:0.45px #262626;">servitude de passage envers Monsieur R et lui interdit l'accès à sa propriété. <i>Pièce n°3 :</i></div>
<div class="t" id="t66" style="left:93.40px;top:632.37px;font-size:14.00px;color:#262626;transform:scaleX(1.0580);transform-origin:0 0;-webkit-text-stroke:0.45px #262626;"><i>Réponse de la SCI à Monsieur R concernant le jugement du 8 février 1995</i></div>
<div class="t" id="t67" style="left:93.40px;top:670.75px;font-size:14.00px;color:#262626;transform:scaleX(1.0520);transform-origin:0 0;-webkit-text-stroke:0.45px #262626;">Le 21 octobre 2005, la SCI MONSIEUR <u>L accuse</u> réception d'une lettre de SCI 13 R.</div>
<div class="t" id="t68" style="left:93.40px;top:689.94px;font-size:14.00px;color:#262626;transform:scaleX(1.0552);transform-origin:0 0;-webkit-text-stroke:0.45px #262626;">datée du 7 octobre. Dans sa réponse, SCI MONSIEUR <u>L exprime</u> des doutes sur la bonne</div>
<div class="t" id="t69" style="left:93.40px;top:709.13px;font-size:14.00px;color:#262626;transform:scaleX(1.0634);transform-origin:0 0;-webkit-text-stroke:0.45px #262626;">foi de SCI 13 R. et joint un jugement du 8 février 1995 pour prouver que la ventilation a</div>
<div class="t" id="t70" style="left:93.40px;top:728.32px;font-size:14.00px;color:#262626;transform:scaleX(1.0634);transform-origin:0 0;-webkit-text-stroke:0.45px #262626;">été installée par la Société S. D, propriétaire de l'immeuble à l'époque. <i>Pièce de DJOKO :</i></div>
<div class="t" id="t71" style="left:93.40px;top:747.51px;font-size:14.00px;color:#262626;transform:scaleX(1.0324);transform-origin:0 0;-webkit-text-stroke:0.45px #262626;"><i>Réception de la lettre de SCI 13 R. par SCI MONSIEUR L</i></div>
<div class="t" id="t72" style="left:93.40px;top:785.89px;font-size:14.00px;color:#262626;transform:scaleX(1.0538);transform-origin:0 0;-webkit-text-stroke:0.45px #262626;">Le 6 juillet 2011, M. Le Gérant du Restaurant MONSIEUR L a reçu une mise en demeure</div>
</div><div class="a" style="left:1172px;top:207px;width:446px;height:812px;background:#fdfdfd;border-left:1px solid #d2d2d2"></div>
<div class="a" style="left:1173px;top:207px;width:445px;height:35px;background:#ebebea"></div>
<div class="t" id="t73" style="left:1193.70px;top:215.94px;font-size:18.50px;color:#262626;transform:scaleX(1.0946);transform-origin:0 0;-webkit-text-stroke-width:0.75px;">Doctrine for Word</div>
<div class="a" style="left:1580.5px;top:216px;width:18.5px;height:18.5px;border-radius:50%;background:#6e6e6e"></div>
<svg style="left:1584.5px;top:220px" width="11" height="11"><path d="M2 2 L9 9 M9 2 L2 9" stroke="#fff" stroke-width="1.7" stroke-linecap="round"/></svg>
<div class="a" style="left:1173px;top:242px;width:445px;height:60px;background:#fff"></div>
<svg style="left:1188px;top:262px" width="22" height="21"><path d="M20 10.5 H2 M10.5 2 L2 10.5 L10.5 19" fill="none" stroke="#222" stroke-width="2" stroke-linecap="round" stroke-linejoin="round"/></svg>
<svg style="left:1482px;top:261px" width="24" height="24"><path d="M7.5 3 Q2 7 2 12 Q2 17.5 8 21" fill="none" stroke="#2f6fc4" stroke-width="2.6" stroke-linecap="round"/><path d="M2.2 21.5 H8.5 V14.8" fill="none" stroke="#2f6fc4" stroke-width="2.6" stroke-linecap="square" stroke-linejoin="miter"/><path d="M15 20.5 Q21 16.5 21 11 Q21 5.5 15 2" fill="none" stroke="#2f6fc4" stroke-width="2.6" stroke-linecap="round"/><path d="M20.8 1.5 H14.5 V8.2" fill="none" stroke="#2f6fc4" stroke-width="2.6" stroke-linecap="square" stroke-linejoin="miter"/></svg>
<div class="t" id="t74" style="left:1515.50px;top:263.69px;font-size:17.50px;color:#2f6fc4;transform:scaleX(1.0710);transform-origin:0 0;-webkit-text-stroke-width:0.45px;">Actualiser</div>
<div class="a" style="left:1173px;top:302px;width:445px;height:1px;background:#d9d9d9"></div>
<div class="a" style="left:1173px;top:303px;width:445px;height:665px;overflow:hidden">
<div class="a" style="left:20.7px;top:-26.5px;width:405px;height:40px;border:1px solid #dadada;border-radius:13px;background:#fff"></div>
<div class="a" style="left:20.7px;top:24.6px;width:405px;height:155px;border:1px solid #dadada;border-radius:13px;background:#fff"></div>
<div class="a" style="left:42.0px;top:41.0px;width:76.3px;height:25px;border-radius:13px;background:#108a5b"></div>
<div class="t" id="t75" style="left:50.00px;top:48.42px;font-size:12.50px;color:#f2fff8;font-weight:bold;transform:scaleX(1.0765);transform-origin:0 0;">Pièce n°7</div>
<div class="t" id="t76" style="left:42.30px;top:83.88px;font-size:15.50px;color:#2f2f2f;transform:scaleX(1.0539);transform-origin:0 0;"><span style="color:#7a7a7a">01/06/2025 - </span>Conclusions de la SCI B.R. contre la</div>
<div class="t" id="t77" style="left:42.30px;top:110.68px;font-size:15.50px;color:#2f2f2f;transform:scaleX(0.9794);transform-origin:0 0;-webkit-text-stroke-width:0.45px;">SCI MONSIEUR L</div>
<div class="a" style="left:42.2px;top:145.0px;width:12.5px;height:12.5px;border-radius:50%;background:#1aa56e"></div>
<div class="t" id="t78" style="left:65.50px;top:142.88px;font-size:15.50px;color:#333;transform:scaleX(0.9045);transform-origin:0 0;-webkit-text-stroke-width:0.45px;">FEDERER</div>
<svg style="left:284.7px;top:145.5px" width="12" height="12"><path d="M6 0.5 V11.5 M0.5 6 H11.5" stroke="#2f6fc4" stroke-width="1.6"/></svg>
<div class="t" id="t79" style="left:307.80px;top:142.88px;font-size:15.50px;color:#2f6fc4;transform:scaleX(1.0545);transform-origin:0 0;-webkit-text-stroke-width:0.45px;">Citer la pièce</div>
<div class="a" style="left:20.7px;top:190.0px;width:405px;height:119.5px;border:1px solid #dadada;border-radius:13px;background:#fff"></div>
<div class="t" id="t80" style="left:42.30px;top:213.18px;font-size:15.50px;color:#2f2f2f;transform:scaleX(1.0512);transform-origin:0 0;"><span style="color:#7a7a7a">01/07/2025 - </span>Conclusions en défense de la SCI</div>
<div class="t" id="t81" style="left:42.30px;top:240.38px;font-size:15.50px;color:#2f2f2f;transform:scaleX(1.0109);transform-origin:0 0;-webkit-text-stroke-width:0.45px;">MONSIEUR L contre la SCI B.R.</div>
<div class="a" style="left:42.2px;top:275.5px;width:12.5px;height:12.5px;border-radius:50%;background:#d8345a"></div>
<div class="t" id="t82" style="left:65.60px;top:273.58px;font-size:15.50px;color:#333;transform:scaleX(0.9699);transform-origin:0 0;-webkit-text-stroke-width:0.45px;">DJOKO</div>
<svg style="left:284.7px;top:275.5px" width="12" height="12"><path d="M6 0.5 V11.5 M0.5 6 H11.5" stroke="#2f6fc4" stroke-width="1.6"/></svg>
<div class="t" id="t83" style="left:307.80px;top:273.58px;font-size:15.50px;color:#2f6fc4;transform:scaleX(1.0545);transform-origin:0 0;-webkit-text-stroke-width:0.45px;">Citer la pièce</div>
<div class="a" style="left:20.7px;top:325.3px;width:293.6px;height:40.2px;border:1.5px solid #3b82d0;border-radius:8px;background:#fff"></div>
<div class="t" id="t84" style="left:90.00px;top:337.08px;font-size:15.50px;color:#2f6fc4;transform:scaleX(1.0458);transform-origin:0 0;-webkit-text-stroke-width:0.45px;">Générer le bordereau</div>
<div class="a" style="left:320.2px;top:325.3px;width:105.1px;height:40.2px;border:1.5px solid #3e5f8e;border-radius:8px;background:#fff"></div>
<div class="t" id="t85" style="left:332.40px;top:337.08px;font-size:15.50px;color:#2f62a6;transform:scaleX(1.0407);transform-origin:0 0;-webkit-text-stroke-width:0.45px;">Tamponner</div>
<div class="t" id="t86" style="left:20.70px;top:399.38px;font-size:15.50px;color:#666;transform:scaleX(1.0756);transform-origin:0 0;-webkit-text-stroke-width:0.45px;">Pièces non citées <span style="font-size:10px;position:relative;top:-2px">•</span> 3</div>
<div class="a" style="left:20.7px;top:435.0px;width:404.5px;height:91.5px;border:1px solid #dcdcdc;border-radius:13px;background:#f2f2f1"></div>
<div class="t" id="t87" style="left:42.40px;top:457.88px;font-size:15.50px;color:#2f2f2f;transform:scaleX(1.0603);transform-origin:0 0;"><span style="color:#7a7a7a">Sans date - </span>Emplacement des installations</div>
<div class="a" style="left:42.2px;top:493.3px;width:12.5px;height:12.5px;border-radius:50%;background:#d8345a"></div>
<div class="t" id="t88" style="left:65.60px;top:491.48px;font-size:15.50px;color:#333;transform:scaleX(0.9699);transform-origin:0 0;-webkit-text-stroke-width:0.45px;">DJOKO</div>
<svg style="left:284.7px;top:493.5px" width="12" height="12"><path d="M6 0.5 V11.5 M0.5 6 H11.5" stroke="#2f6fc4" stroke-width="1.6"/></svg>
<div class="t" id="t89" style="left:307.80px;top:491.48px;font-size:15.50px;color:#2f6fc4;transform:scaleX(1.0545);transform-origin:0 0;-webkit-text-stroke-width:0.45px;">Citer la pièce</div>
<div class="a" style="left:20.7px;top:538.3px;width:404.5px;height:160px;border:1px solid #dadada;border-radius:13px;background:#fff"></div>
<div class="a" style="left:41.8px;top:555.0px;width:69.6px;height:24.8px;border-radius:12.5px;background:#ebebea"></div>
<div class="t" id="t90" style="left:50.50px;top:561.42px;font-size:12.50px;color:#333;font-weight:bold;transform:scaleX(1.0646);transform-origin:0 0;">Non cité</div>
<div class="t" id="t91" style="left:42.30px;top:596.58px;font-size:15.50px;color:#2f2f2f;transform:scaleX(1.0792);transform-origin:0 0;"><span style="color:#7a7a7a">20/10/2005 - </span>Avis de réception de l'envoi</div>
<div class="t" id="t92" style="left:42.30px;top:623.28px;font-size:15.50px;color:#2f2f2f;transform:scaleX(1.0722);transform-origin:0 0;-webkit-text-stroke-width:0.45px;">recommandé</div>
<div class="a" style="left:42.2px;top:658.5px;width:12.5px;height:12.5px;border-radius:50%;background:#1aa56e"></div>
<div class="t" id="t93" style="left:65.60px;top:656.68px;font-size:15.50px;color:#333;transform:scaleX(0.9045);transform-origin:0 0;-webkit-text-stroke-width:0.45px;">FEDERER</div>
<svg style="left:284.7px;top:658.5px" width="12" height="12"><path d="M6 0.5 V11.5 M0.5 6 H11.5" stroke="#2f6fc4" stroke-width="1.6"/></svg>
<div class="t" id="t94" style="left:307.80px;top:656.68px;font-size:15.50px;color:#2f6fc4;transform:scaleX(1.0545);transform-origin:0 0;-webkit-text-stroke-width:0.45px;">Citer la pièce</div>
</div>
<div class="a" style="left:1173px;top:968px;width:445px;height:51px;background:#f7f8f8;border-top:1px solid #dedede"></div>
<svg style="left:1314px;top:982px" width="25" height="25"><path d="M9 1.5 H3 Q1.5 1.5 1.5 3 V22 Q1.5 23.5 3 23.5 H9" fill="none" stroke="#2f6fc4" stroke-width="2.2" stroke-linecap="round"/><path d="M8 12.5 H22.5 M17.5 7.5 L22.5 12.5 L17.5 17.5" fill="none" stroke="#2f6fc4" stroke-width="2.2" stroke-linecap="round" stroke-linejoin="round"/></svg>
<div class="t" id="t95" style="left:1347.60px;top:985.46px;font-size:18.00px;color:#2f6fc4;transform:scaleX(1.0453);transform-origin:0 0;">Se déconnecter</div>
<div class="a" style="left:1607.5px;top:884.3px;width:9px;height:98.7px;border-radius:4.5px;background:#7b7b7b"></div>
<svg style="left:1244px;top:737px" width="14" height="22"><path d="M1.5 1.5 V17.5 L5.5 13.5 L8.5 20 L11 19 L8.2 12.5 H13.5 Z" fill="#111" stroke="#fff" stroke-width="1"/></svg><div class="a" style="left:16px;top:1019px;width:1602px;height:28px;background:linear-gradient(#e4e4e2,#dcdcda);border-top:1px solid #c6c6c4;border-radius:0 0 11px 11px"></div>
<div class="a" style="left:16px;top:1033px;width:14px;height:14px;background:#050505;z-index:-1"></div>
<div class="t" id="t96" style="left:46.90px;top:1025.86px;font-size:16.00px;color:#707070;transform:scaleX(0.9566);transform-origin:0 0;-webkit-text-stroke-width:0.1px;">Page 1 sur 2</div>
<div class="t" id="t97" style="left:160.30px;top:1025.86px;font-size:16.00px;color:#707070;transform:scaleX(1.0136);transform-origin:0 0;-webkit-text-stroke-width:0.1px;">13 sur 939 mots</div>
<svg style="left:301px;top:1025px" width="22" height="18"><path d="M10 3 Q6 1 1.5 1.5 V15 Q6 14.5 10 16.5 Q14 14.5 18.5 15 V12" fill="none" stroke="#707070" stroke-width="1.4"/><path d="M10 3 V16.5" stroke="#707070" stroke-width="1.4"/><path d="M13.5 3 L18.5 8 M18.5 3 L13.5 8" stroke="#707070" stroke-width="1.3"/></svg>
<div class="t" id="t98" style="left:345.30px;top:1025.86px;font-size:16.00px;color:#707070;transform:scaleX(0.9782);transform-origin:0 0;-webkit-text-stroke-width:0.1px;">Français (France)</div>
<svg style="left:494px;top:1024px" width="22" height="20"><circle cx="8" cy="2.5" r="2" fill="none" stroke="#707070" stroke-width="1.3"/><path d="M1.5 6 Q8 8 14.5 6 M8 7.5 V12 Q5 13 5.5 18 M8 12 Q10 13 10.5 15" fill="none" stroke="#707070" stroke-width="1.4" stroke-linecap="round"/><path d="M11.5 15 L14.5 18 L20.5 11" fill="none" stroke="#707070" stroke-width="1.4" stroke-linecap="round"/></svg>
<div class="t" id="t99" style="left:521.70px;top:1025.86px;font-size:16.00px;color:#707070;transform:scaleX(1.0223);transform-origin:0 0;-webkit-text-stroke-width:0.1px;">Accessibilité : vérification terminée</div>
<svg style="left:1075px;top:1026px" width="20" height="15"><rect x="0.8" y="0.8" width="17.5" height="13" rx="2" fill="none" stroke="#707070" stroke-width="1.3"/><path d="M3.5 5.5 V3.5 H5.5 M13.5 3.5 H15.5 V5.5 M15.5 9.5 V11.5 H13.5 M5.5 11.5 H3.5 V9.5" fill="none" stroke="#707070" stroke-width="1.2"/></svg>
<div class="t" id="t100" style="left:1105.80px;top:1025.86px;font-size:16.00px;color:#707070;transform:scaleX(0.9569);transform-origin:0 0;-webkit-text-stroke-width:0.1px;">Focus</div>
<div class="a" style="left:1162px;top:1020px;width:46px;height:27px;background:#aaaaa8"></div>
<svg style="left:1175px;top:1024px" width="19" height="20"><rect x="1" y="1" width="16.5" height="17" rx="1.5" fill="#b8b8b6" stroke="#fff" stroke-width="1.5"/><path d="M3.5 5 H15 M3.5 8.5 H15 M3.5 12 H15 M3.5 15 H15" stroke="#fff" stroke-width="1.3"/></svg>
<svg style="left:1220px;top:1024px" width="22" height="21"><rect x="1" y="1" width="14" height="14" rx="1" fill="none" stroke="#707070" stroke-width="1.4"/><path d="M3.5 5 H12.5 M3.5 8.5 H9 M3.5 12 H8" stroke="#707070" stroke-width="1.3"/><circle cx="15" cy="14" r="5.5" fill="#707070"/><path d="M12 12 Q14 13 13.5 15 Q16 16 15.5 19 M17 9.5 Q16 12 19 13" fill="none" stroke="#ddd" stroke-width="1"/></svg>
<svg style="left:1267px;top:1025px" width="20" height="17"><path d="M1 2 H3 M6 2 H18 M4 6.5 H6 M9 6.5 H19 M4 11 H6 M9 11 H19 M4 15.5 H6 M9 15.5 H17" stroke="#707070" stroke-width="1.5"/></svg>
<svg style="left:1313px;top:1025px" width="19" height="17"><path d="M0.5 2 H18 M0.5 6.5 H16 M0.5 11 H18 M0.5 15.5 H14" stroke="#707070" stroke-width="1.6"/></svg>
<div class="a" style="left:1355px;top:1032px;width:10px;height:2px;background:#707070"></div>
<div class="a" style="left:1375px;top:1030.5px;width:126px;height:5px;border-radius:2.5px;background:#9b9b9b"></div>
<div class="a" style="left:1428px;top:1023px;width:20px;height:20px;border-radius:50%;background:#fff;box-shadow:0 0.5px 1.5px rgba(0,0,0,.35)"></div>
<svg style="left:1510px;top:1028px" width="11" height="11"><path d="M5.5 0.5 V10.5 M0.5 5.5 H10.5" stroke="#707070" stroke-width="2"/></svg>
<div class="t" id="t101" style="left:1544.00px;top:1025.86px;font-size:16.00px;color:#707070;transform:scaleX(0.9477);transform-origin:0 0;-webkit-text-stroke-width:0.1px;">103 %</div>
<div class="a" style="left:1634px;top:54px;width:269.5px;height:477px;background:#1d1f1e;border-radius:7px"></div>
<div class="a" style="left:1745.8px;top:270px;width:45px;height:45px;border-radius:50%;background:#dcf0bd"></div>
<div class="t" id="t102" style="left:1762.50px;top:286.11px;font-size:17.00px;color:#7db04a;-webkit-text-stroke-width:0.6px;">L</div>
<div class="a" style="left:1646px;top:490.5px;width:83px;height:29px;background:#1db074"></div>
<div class="t" id="t103" style="left:1649.00px;top:494.38px;font-size:22.00px;color:#fff;font-weight:bold;transform:scaleX(1.1452);transform-origin:0 0;">LOUIS</div>
<div class="a" style="left:1634px;top:547.5px;width:269.5px;height:477.5px;border-radius:7px;overflow:hidden;background:#b9ad9b">
<svg style="left:0;top:0" width="270" height="478" viewBox="0 0 270 478">
<defs>
<filter id="bl" x="-30%" y="-30%" width="160%" height="160%"><feGaussianBlur stdDeviation="2.5"/></filter>
<filter id="bl2" x="-30%" y="-30%" width="160%" height="160%"><feGaussianBlur stdDeviation="5"/></filter>
<filter id="bl1" x="-30%" y="-30%" width="160%" height="160%"><feGaussianBlur stdDeviation="1"/></filter>
<linearGradient id="wall" x1="0" y1="0" x2="1" y2="1"><stop offset="0" stop-color="#ecebe5"/><stop offset="0.5" stop-color="#f4f3ee"/><stop offset="1" stop-color="#ebeae4"/></linearGradient>
<linearGradient id="bw" x1="0" y1="0" x2="0" y2="1"><stop offset="0" stop-color="#bfb4a3"/><stop offset="1" stop-color="#b0a491"/></linearGradient>
<radialGradient id="face" cx="0.5" cy="0.22" r="0.8"><stop offset="0" stop-color="#5e4c50"/><stop offset="0.28" stop-color="#4c3834"/><stop offset="0.5" stop-color="#432e28"/><stop offset="1" stop-color="#37231e"/></radialGradient>
</defs>
<rect x="0" y="0" width="270" height="190" fill="url(#wall)"/>
<path d="M0 20 L110 12 M0 40 L120 30 M0 45 L110 38 M60 55 L120 52 M60 80 L120 75 M70 95 L120 90 M40 120 L115 112" stroke="#b8b8b2" stroke-width="2" opacity="0.5" filter="url(#bl1)"/>
<rect x="218" y="146" width="52" height="24" fill="#d3d8d4" filter="url(#bl)"/>
<rect x="0" y="185" width="270" height="300" fill="url(#bw)"/>
<rect x="0" y="181" width="270" height="7" fill="#d0ccc2" filter="url(#bl1)"/>
<ellipse cx="7" cy="219" rx="6" ry="4" fill="#cf5f5a" filter="url(#bl1)"/>
<ellipse cx="29" cy="219" rx="10" ry="7" fill="#f4f4f0" filter="url(#bl1)"/>
<path d="M0 330 Q30 316 66 308 L90 478 L0 478 Z" fill="#6c6865" filter="url(#bl)"/>
<path d="M208 150 Q248 190 262 260 Q272 330 268 400 Q264 450 260 478 L170 478 Q220 420 220 340 Q222 260 202 195 Z" fill="#2e2628" filter="url(#bl)"/>
<path d="M48 235 Q44 160 78 112 Q112 76 142 77 Q198 80 226 126 Q242 170 236 235 L222 245 L70 245 Z" fill="#3d343c" filter="url(#bl)"/>
<path d="M56 225 Q58 140 100 126 Q140 116 180 126 Q216 142 222 225 Q226 300 206 336 Q186 370 140 370 Q100 368 80 336 Q60 300 56 225 Z" fill="url(#face)" filter="url(#bl)"/>
<path d="M72 150 Q105 108 155 110 Q200 118 218 160 Q182 136 138 136 Q100 138 76 165 Z" fill="#3e3540" opacity="0.8" filter="url(#bl)"/>
<g transform="rotate(-7 130 240)">
<rect x="38" y="226" width="88" height="58" rx="22" fill="#5b4a46" opacity="0.3"/>
<rect x="136" y="214" width="90" height="62" rx="22" fill="#5b4a46" opacity="0.25"/>
<rect x="38" y="226" width="88" height="58" rx="22" fill="none" stroke="#2c1b19" stroke-width="5.5"/>
<rect x="136" y="214" width="90" height="62" rx="22" fill="none" stroke="#2c1b19" stroke-width="5.5"/>
<path d="M126 240 Q131 234 136 236" fill="none" stroke="#2c1b19" stroke-width="4"/>
<path d="M52 226 H112 M150 214 H212" stroke="#a8988e" stroke-width="1.6" opacity="0.7"/>
</g>
<ellipse cx="85" cy="254" rx="18" ry="9" fill="#2a1e1c" opacity="0.5" filter="url(#bl1)"/>
<ellipse cx="180" cy="238" rx="18" ry="9" fill="#2a1e1c" opacity="0.5" filter="url(#bl1)"/>
<ellipse cx="128" cy="284" rx="13" ry="9" fill="#4c342e" filter="url(#bl)"/>
<path d="M110 316 Q138 306 166 316 Q158 330 138 332 Q118 330 110 316 Z" fill="#5a3434" filter="url(#bl1)"/>
<path d="M90 352 Q114 382 150 386 Q190 380 214 352 L222 400 L210 478 L118 478 Z" fill="#b3a593" filter="url(#bl)"/>
<path d="M66 326 Q78 372 118 390 L112 398 Q76 384 60 336 Z" fill="#e2d8cc" filter="url(#bl1)"/>
<path d="M120 384 Q160 378 196 360 L198 372 Q160 392 122 396 Z" fill="#b83438" filter="url(#bl1)"/>
<path d="M124 394 Q162 388 200 372 L200 382 Q162 398 126 402 Z" fill="#e6ddd2" filter="url(#bl1)"/>
<path d="M30 478 Q50 426 86 396 Q106 384 122 392 Q104 424 84 478 Z" fill="#2b3360" filter="url(#bl1)"/>
<path d="M84 478 Q98 432 112 400 L128 402 Q118 440 114 478 Z" fill="#e6ddd2" filter="url(#bl1)"/>
<path d="M114 478 Q116 440 124 398 L142 400 Q134 440 140 478 Z" fill="#c0343a" filter="url(#bl1)"/>
<path d="M54 478 Q68 442 92 412 L102 418 Q84 446 72 478 Z" fill="#c0343a" filter="url(#bl1)"/>
<path d="M88 382 Q110 370 130 378 L136 392 Q116 392 96 400 Z" fill="#c0343a" filter="url(#bl1)"/>
<path d="M168 478 Q212 432 234 392 Q256 420 260 478 Z" fill="#43352f" filter="url(#bl)"/>
<path d="M178 472 Q194 436 232 426 Q256 440 252 472 Z" fill="#7c6858" opacity="0.7" filter="url(#bl)"/>
</svg></div>
<div class="a" style="left:1646px;top:984px;width:103px;height:29px;background:#1db074"></div>
<div class="t" id="t104" style="left:1649.00px;top:987.88px;font-size:22.00px;color:#fff;font-weight:bold;transform:scaleX(1.1669);transform-origin:0 0;">ANISSA</div>
<div class="a" style="left:0;top:1078px;width:1920px;height:2px;background:#181818"></div>
<div class="a" style="left:1917px;top:0;width:3px;height:1080px;background:#181818"></div></body></html>
